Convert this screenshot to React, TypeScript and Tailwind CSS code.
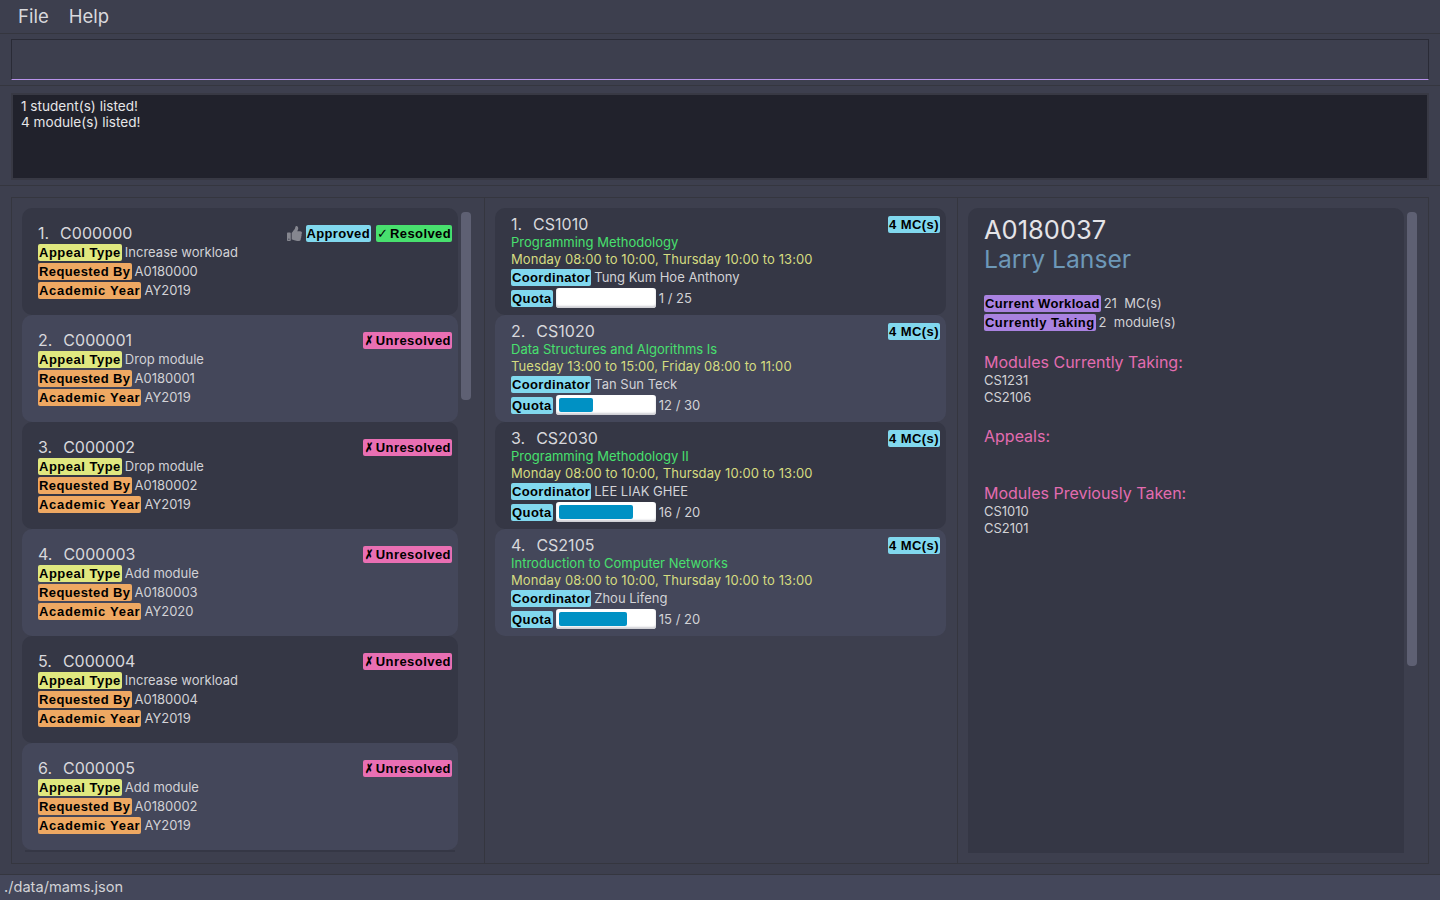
import type { ReactNode } from 'react'
import { FaThumbsUp } from 'react-icons/fa'

const appeals = [
  { id: 'C000000', type: 'Increase workload', by: 'A0180000', year: 'AY2019', resolved: true },
  { id: 'C000001', type: 'Drop module', by: 'A0180001', year: 'AY2019' },
  { id: 'C000002', type: 'Drop module', by: 'A0180002', year: 'AY2019' },
  { id: 'C000003', type: 'Add module', by: 'A0180003', year: 'AY2020' },
  { id: 'C000004', type: 'Increase workload', by: 'A0180004', year: 'AY2019' },
  { id: 'C000005', type: 'Add module', by: 'A0180002', year: 'AY2019' },
]

const modules = [
  { code: 'CS1010', name: 'Programming Methodology', time: 'Monday 08:00 to 10:00, Thursday 10:00 to 13:00', lead: 'Tung Kum Hoe Anthony', quota: '1 / 25', fill: 0 },
  { code: 'CS1020', name: 'Data Structures and Algorithms Is', time: 'Tuesday 13:00 to 15:00, Friday 08:00 to 11:00', lead: 'Tan Sun Teck', quota: '12 / 30', fill: 36 },
  { code: 'CS2030', name: 'Programming Methodology II', time: 'Monday 08:00 to 10:00, Thursday 10:00 to 13:00', lead: 'LEE LIAK GHEE', quota: '16 / 20', fill: 79 },
  { code: 'CS2105', name: 'Introduction to Computer Networks', time: 'Monday 08:00 to 10:00, Thursday 10:00 to 13:00', lead: 'Zhou Lifeng', quota: '15 / 20', fill: 73 },
]

function Tag({ children, tone }: { children: ReactNode; tone: string }) {
  return (
    <span className={`inline-block h-[17px] shrink-0 rounded-[2px] px-px font-['Liberation_Sans',sans-serif] text-[13px] leading-[17px] font-bold whitespace-nowrap text-black ${tone}`}>
      {children}
    </span>
  )
}

function Field({ label, tone, value }: { label: string; tone: string; value: string }) {
  return (
    <div className="flex h-[19px] items-center gap-[3px]">
      <Tag tone={tone}>{label}</Tag>
      <span className="text-[13px] whitespace-pre text-[#d2d2d6]">{value}</span>
    </div>
  )
}

function AppealCard({ index, appeal }: { index: number; appeal: (typeof appeals)[number] }) {
  return (
    <article className={`flex h-[107px] flex-col rounded-[10px] pt-[14px] pr-[6px] pl-4 ${index % 2 === 0 ? 'bg-[#353745]' : 'bg-[#44475a]'}`}>
      <div className="flex h-[21px] items-center justify-between">
        <h3 className="text-[16px] whitespace-pre text-[#d8d8dc] [word-spacing:1px]">{`${index + 1}.  ${appeal.id}`}</h3>
        {appeal.resolved ? (
          <div className="mt-[2px] flex items-center gap-[5px]">
            <FaThumbsUp className="mr-[-1px] h-[15px] w-[15px] text-[#85868f]" />
            <Tag tone="bg-[#81d8ee] tracking-[0.35px]">Approved</Tag>
            <Tag tone="bg-[#48e06e] tracking-[0.4px]"><span className="inline-block w-[9px] font-normal">✓</span> Resolved</Tag>
          </div>
        ) : (
          <div className="mt-[2px] flex">
            <Tag tone="bg-[#e96fb3] tracking-[0.45px]"><span className="inline-block w-[8px] origin-left translate-x-px scale-x-75">✗</span> Unresolved</Tag>
          </div>
        )}
      </div>
      <Field label="Appeal Type" tone="bg-[#e0e87f] tracking-[0.5px]" value={appeal.type} />
      <Field label="Requested By" tone="bg-[#eea862] tracking-[0.4px]" value={appeal.by} />
      <Field label="Academic Year" tone="bg-[#eea862] tracking-[0.7px]" value={appeal.year} />
    </article>
  )
}

function ModuleCard({ index, mod }: { index: number; mod: (typeof modules)[number] }) {
  return (
    <article className={`flex h-[107px] flex-col rounded-[10px] pt-[5px] pr-[6px] pl-4 ${index % 2 === 0 ? 'bg-[#353745]' : 'bg-[#44475a]'}`}>
      <div className="flex h-[21px] items-center justify-between">
        <h3 className="text-[16px] whitespace-pre text-[#d8d8dc] [word-spacing:1px]">{`${index + 1}.  ${mod.code}`}</h3>
        <div className="mt-[2px] flex">
          <Tag tone="bg-[#81d8ee] tracking-[0.45px]">4 MC(s)</Tag>
        </div>
      </div>
      <p className="h-[17px] text-[13px] leading-[17px] text-[#48e06e]">{mod.name}</p>
      <p className="h-[17px] text-[13px] leading-[17px] tracking-[0.09px] text-[#d5dc80]">{mod.time}</p>
      <Field label="Coordinator" tone="bg-[#81d8ee] tracking-[0.35px]" value={mod.lead} />
      <div className="mt-px flex h-[20px] items-center gap-[3px]">
        <Tag tone="bg-[#81d8ee] tracking-[0.45px]">Quota</Tag>
        <div className="h-[20px] w-[100px] rounded-[3px] bg-white p-[3px] shadow-[inset_0_-2px_2px_#cfcfd4]">
          <div className="h-full rounded-[2px] bg-[#0091c4]" style={{ width: `${mod.fill}%` }} />
        </div>
        <span className="mt-px text-[13px] text-[#d2d2d6]">{mod.quota}</span>
      </div>
    </article>
  )
}

function Heading({ children }: { children: string }) {
  return <h4 className="h-[20px] text-[16px] leading-[20px] text-[#e36cb0]">{children}</h4>
}

function Code({ children }: { children: string }) {
  return <p className="h-[17px] text-[13px] leading-[17px] text-[#d2d2d6]">{children}</p>
}

export default function App() {
  return (
    <div className="flex h-[900px] w-[1440px] flex-col overflow-hidden bg-[#3d3f4e] font-['Inter',sans-serif]">
      <nav className="flex h-[34px] items-center gap-[20px] border-b border-[#35363f] pl-[18px] text-[18.5px] text-[#d9d9dd]">
        <span>File</span>
        <span>Help</span>
      </nav>

      <section className="h-[52px] border-b border-[#35363f] px-[11px] pt-[5px]">
        <div className="h-[41px] border border-[#2a2b36] border-b-[#b893ea]" />
      </section>

      <section className="h-[100px] border-b border-[#35363f] px-[11px] pt-[7px]">
        <div className="h-[87px] border-2 border-[#383944] bg-[#21222c] px-2 pt-[3px] text-[13.6px] leading-4 text-[#e6e6e8]">
          <p>1 student(s) listed!</p>
          <p>4 module(s) listed!</p>
        </div>
      </section>

      <main className="min-h-0 flex-1 border-b border-[#35363f] px-[11px] pt-[11px] pb-[10px]">
        <div className="flex h-full border border-[#35363f]">
          <div className="flex h-full w-[473px] border-r border-[#35363f] pt-[10px] pl-[10px]">
            <div className="h-[645px] w-[436px] overflow-hidden">
              {appeals.map((appeal, i) => <AppealCard key={appeal.id} index={i} appeal={appeal} />)}
              <div className="mx-[3px] h-[2px] bg-[#353745]" />
            </div>
            <div className="mt-[4px] ml-[3px] h-[188px] w-[10px] rounded-[4px] bg-[#5e6073]" />
          </div>

          <div className="flex h-full w-[473px] flex-col border-r border-[#35363f] pt-[10px] pl-[10px]">
            <div className="w-[451px]">
              {modules.map((mod, i) => <ModuleCard key={mod.code} index={i} mod={mod} />)}
            </div>
          </div>

          <div className="flex h-full flex-1 pt-[10px] pl-[10px]">
            <aside className="h-[645px] w-[436px] rounded-t-[10px] bg-[#353745] pt-[7px] pl-4">
              <h2 className="h-[29px] text-[25.5px] leading-[30px] text-[#e4e4e8]">A0180037</h2>
              <h3 className="h-[30px] text-[24.7px] leading-[30px] text-[#6d98b8]">Larry Lanser</h3>
              <div className="mt-[20px]">
                <Field label="Current Workload" tone="bg-[#a982e0] tracking-[0.32px]" value="21  MC(s)" />
                <Field label="Currently Taking" tone="bg-[#a982e0] tracking-[0.45px]" value="2  module(s)" />
              </div>
              <div className="mt-[20px]">
                <Heading>Modules Currently Taking:</Heading>
                <Code>CS1231</Code>
                <Code>CS2106</Code>
              </div>
              <div className="mt-[20px] h-[57px]">
                <Heading>Appeals:</Heading>
              </div>
              <Heading>Modules Previously Taken:</Heading>
              <Code>CS1010</Code>
              <Code>CS2101</Code>
            </aside>
            <div className="mt-[4px] ml-[3px] h-[454px] w-[10px] rounded-[4px] bg-[#5e6073]" />
          </div>
        </div>
      </main>

      <footer className="flex h-[25px] items-center bg-[#44475a] pl-[4px] text-[14.6px] text-[#d2d2d6]">./data/mams.json</footer>
    </div>
  )
}
